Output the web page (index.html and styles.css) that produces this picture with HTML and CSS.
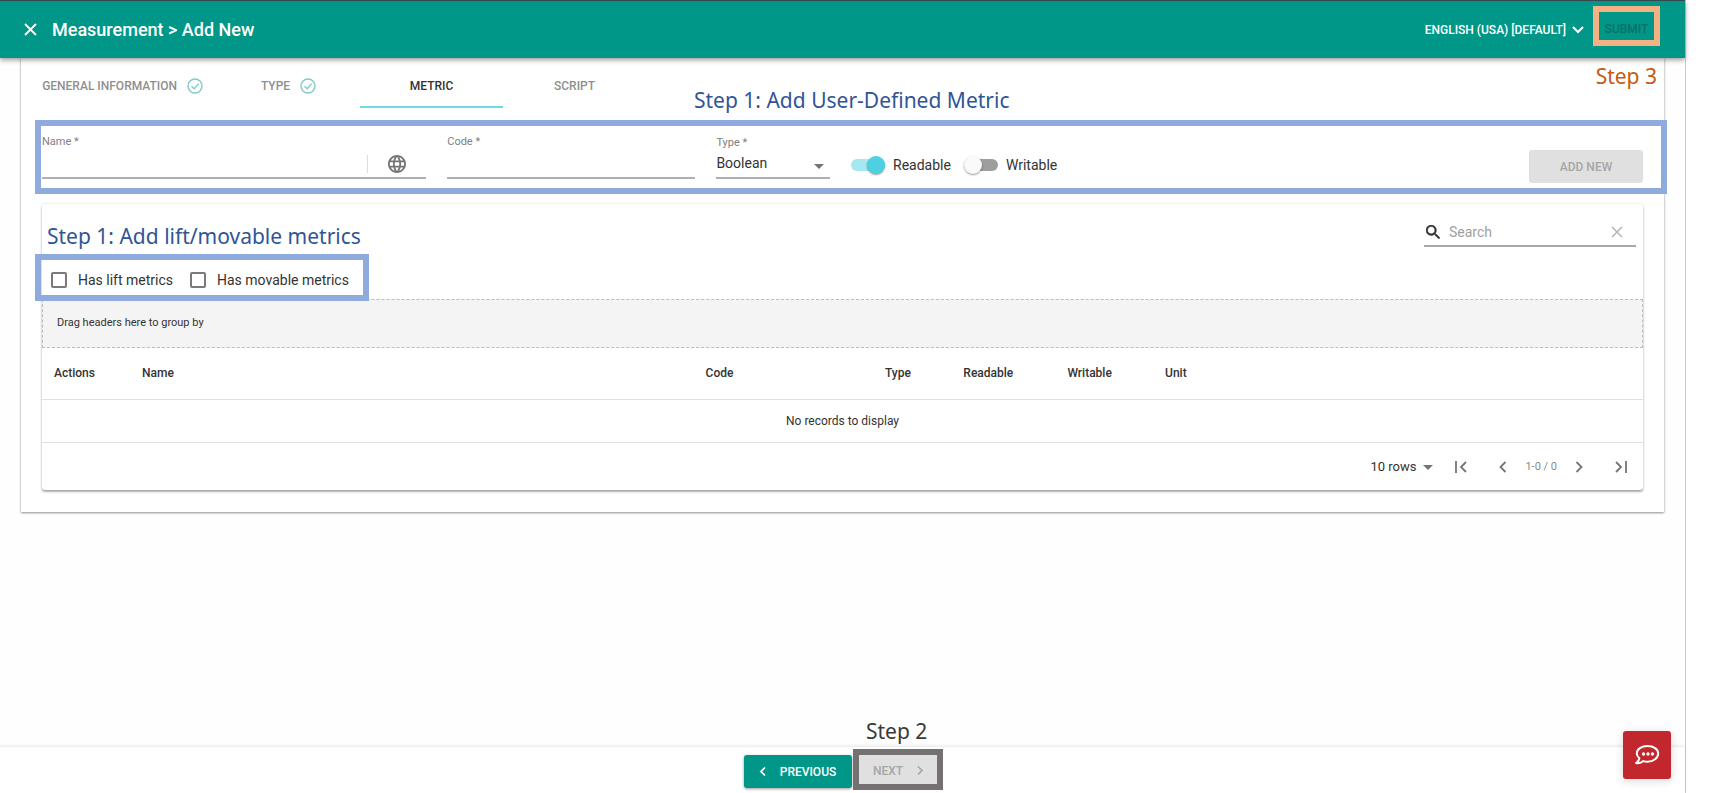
FILE: index.html
```html
<!DOCTYPE html>
<html lang="en">
<head>
<meta charset="utf-8">
<title>Measurement &gt; Add New</title>
<link rel="stylesheet" href="styles.css">
</head>
<body>
<div class="app">
  <header class="topbar">
    <button class="icon-btn close-btn" type="button" aria-label="Close">
      <svg width="13" height="13" viewBox="0 0 13 13" fill="none" stroke="currentColor" stroke-width="1.8"><path d="M1 1l11 11M12 1L1 12"/></svg>
    </button>
    <h1 class="title">Measurement &gt; Add New</h1>
    <button class="lang-btn" type="button">ENGLISH (USA) [DEFAULT]
      <svg width="12" height="8" viewBox="0 0 12 8" fill="none" stroke="currentColor" stroke-width="2"><path d="M1 1l5 5 5-5"/></svg>
    </button>
    <div class="submit-wrap">
      <button class="submit-btn" type="button" disabled>SUBMIT</button>
      <span class="note note-orange">Step 3</span>
    </div>
  </header>

  <main class="card">
    <nav class="tabs">
      <a class="tab tab-first" href="#general">GENERAL INFORMATION
        <svg class="check" width="16" height="16" viewBox="0 0 16 16" fill="none" stroke="currentColor" stroke-width="1.4"><circle cx="8" cy="8" r="7"/><path d="M4.5 8.2l2.6 2.6 4.6-5.2"/></svg>
      </a>
      <a class="tab" href="#type">TYPE
        <svg class="check" width="16" height="16" viewBox="0 0 16 16" fill="none" stroke="currentColor" stroke-width="1.4"><circle cx="8" cy="8" r="7"/><path d="M4.5 8.2l2.6 2.6 4.6-5.2"/></svg>
      </a>
      <a class="tab tab-active" href="#metric">METRIC</a>
      <a class="tab" href="#script">SCRIPT</a>
    </nav>

    <form class="metric-form">
      <span class="frame"></span>
      <span class="note note-metric">Step 1: Add User-Defined Metric</span>
      <div class="field field-name">
        <label for="name">Name *</label>
        <div class="control">
          <input id="name" type="text">
          <button class="icon-btn globe-btn" type="button" aria-label="Translations">
            <svg width="18" height="18" viewBox="2 2 20 20" fill="currentColor"><path d="M11.99 2C6.47 2 2 6.48 2 12s4.47 10 9.99 10C17.52 22 22 17.52 22 12S17.52 2 11.99 2zm6.93 6h-2.95c-.32-1.25-.78-2.45-1.38-3.56 1.84.63 3.37 1.91 4.33 3.56zM12 4.04c.83 1.2 1.48 2.53 1.91 3.96h-3.82c.43-1.43 1.08-2.76 1.91-3.96zM4.26 14C4.1 13.36 4 12.69 4 12s.1-1.36.26-2h3.38c-.08.66-.14 1.32-.14 2s.06 1.34.14 2H4.26zm.82 2h2.95c.32 1.25.78 2.45 1.38 3.56-1.84-.63-3.37-1.9-4.33-3.56zm2.95-8H5.08c.96-1.66 2.49-2.93 4.33-3.56C8.81 5.55 8.35 6.75 8.03 8zM12 19.96c-.83-1.2-1.48-2.53-1.91-3.96h3.82c-.43 1.43-1.08 2.76-1.91 3.96zM14.34 14H9.66c-.09-.66-.16-1.32-.16-2s.07-1.35.16-2h4.68c.09.65.16 1.32.16 2s-.07 1.34-.16 2zm.25 5.56c.6-1.11 1.06-2.31 1.38-3.56h2.95c-.96 1.65-2.49 2.93-4.33 3.56zM16.36 14c.08-.66.14-1.32.14-2s-.06-1.34-.14-2h3.38c.16.64.26 1.31.26 2s-.1 1.36-.26 2h-3.38z"/></svg>
          </button>
        </div>
      </div>
      <div class="field field-code">
        <label for="code">Code *</label>
        <div class="control"><input id="code" type="text"></div>
      </div>
      <div class="field field-type">
        <label for="type">Type *</label>
        <div class="control">
          <select id="type"><option>Boolean</option></select>
          <svg class="caret" width="10" height="5" viewBox="0 0 10 5" fill="currentColor"><path d="M0 0h10L5 5z"/></svg>
        </div>
      </div>
      <div class="switches">
        <label class="switch"><input type="checkbox" checked>Readable</label>
        <label class="switch"><input type="checkbox">Writable</label>
      </div>
      <button class="btn btn-disabled add-btn" type="button" disabled>ADD NEW</button>
    </form>

    <section class="table-card">
      <div class="toolbar">
        <span class="note note-lift">Step 1: Add lift/movable metrics</span>
        <div class="search">
          <svg width="14" height="14" viewBox="3 3 17.5 17.5" fill="currentColor"><path d="M15.5 14h-.79l-.28-.27C15.41 12.59 16 11.11 16 9.500 16 5.910 13.090 3 9.500 3S3 5.910 3 9.500 5.910 16 9.500 16c1.610 0 3.090-.59 4.230-1.570l.27.28v.79l5 4.990L20.490 19l-4.990-5zm-6 0C7.010 14 5 11.990 5 9.500S7.010 5 9.500 5 14 7.010 14 9.500 11.990 14 9.500 14z" stroke="currentColor" stroke-width=".6"/></svg>
          <input type="text" placeholder="Search" aria-label="Search">
          <button class="icon-btn clear-btn" type="button" aria-label="Clear search">
            <svg width="12" height="12" viewBox="0 0 12 12" fill="none" stroke="currentColor" stroke-width="1.5"><path d="M1 1l10 10M11 1L1 11"/></svg>
          </button>
        </div>
      </div>
      <div class="options">
        <span class="frame frame-options"></span>
        <label class="tick"><input type="checkbox">Has lift metrics</label>
        <label class="tick"><input type="checkbox">Has movable metrics</label>
      </div>
      <div class="group-drop">Drag headers here to group by</div>
      <table class="grid">
        <colgroup><col class="c-actions"><col class="c-name"><col class="c-code"><col class="c-type"><col class="c-read"><col class="c-write"><col></colgroup>
        <thead><tr><th>Actions</th><th>Name</th><th>Code</th><th>Type</th><th>Readable</th><th>Writable</th><th>Unit</th></tr></thead>
        <tbody><tr><td colspan="7">No records to display</td></tr></tbody>
      </table>
      <div class="pager">
        <div class="rows">
          <select aria-label="Rows per page"><option>10 rows</option></select>
          <svg class="caret" width="10" height="5" viewBox="0 0 10 5" fill="currentColor"><path d="M0 0h10L5 5z"/></svg>
        </div>
        <button class="icon-btn" type="button" aria-label="First page"><svg width="12" height="12" viewBox="0 0 12 12" fill="none" stroke="currentColor" stroke-width="1.8"><path d="M1 0v12M11 1L6 6l5 5"/></svg></button>
        <button class="icon-btn" type="button" aria-label="Previous page"><svg width="12" height="12" viewBox="0 0 12 12" fill="none" stroke="currentColor" stroke-width="1.8"><path d="M8.500 1l-5 5 5 5"/></svg></button>
        <span class="range">1-0 / 0</span>
        <button class="icon-btn" type="button" aria-label="Next page"><svg width="12" height="12" viewBox="0 0 12 12" fill="none" stroke="currentColor" stroke-width="1.8"><path d="M3.500 1l5 5-5 5"/></svg></button>
        <button class="icon-btn" type="button" aria-label="Last page"><svg width="12" height="12" viewBox="0 0 12 12" fill="none" stroke="currentColor" stroke-width="1.8"><path d="M11 0v12M1 1l5 5-5 5"/></svg></button>
      </div>
    </section>
  </main>

  <footer class="bottombar">
    <button class="btn btn-primary" type="button">
      <svg width="6" height="9" viewBox="0 0 6 9" fill="none" stroke="currentColor" stroke-width="1.6"><path d="M5 .5l-4 4 4 4"/></svg>
      PREVIOUS
    </button>
    <div class="next-wrap">
      <span class="note note-dark">Step 2</span>
      <button class="next-btn" type="button" disabled>NEXT
        <svg width="6" height="9" viewBox="0 0 6 9" fill="none" stroke="currentColor" stroke-width="1.6"><path d="M1 .5l4 4-4 4"/></svg>
      </button>
    </div>
  </footer>
  <button class="chat-btn" type="button" aria-label="Chat">
    <svg width="26" height="22" viewBox="0 0 26 22" fill="none" stroke="currentColor" stroke-width="2" stroke-linejoin="round"><path d="M13.500 2C7.500 2 2.800 5.200 2.800 9.300c0 2 1 3.700 2.600 5-.3 1.900-1.400 3.500-3.400 4.700 2.600.6 5.200 0 7.300-1.900 1.300.4 2.700.6 4.200.6 6 0 10.700-3.700 10.700-8.200S19.500 2 13.500 2z"/><g fill="currentColor" stroke="none"><circle cx="9.500" cy="10" r="1.700"/><circle cx="14" cy="10" r="1.700"/><circle cx="18.500" cy="10" r="1.700"/></g></svg>
  </button>
</div>
</body>
</html>
```

FILE: styles.css
```css
* { box-sizing: border-box; }
body {
  margin: 0;
  padding-right: 23px;
  background: #fff;
  color: #333;
  font: 14px/20px Roboto, "Liberation Sans", sans-serif;
}
button, input, select { font: inherit; color: inherit; }
button { border: 0; background: none; padding: 0; }
.app {
  position: relative;
  display: flex;
  flex-direction: column;
  min-height: 100vh;
  border-right: 1px solid #ccc;
  background: #fefefe;
}
.icon-btn { display: flex; align-items: center; justify-content: center; }

/* Step annotations laid over the interface */
.note {
  position: absolute;
  font: 21px/28px "Noto Sans", "Open Sans", sans-serif;
  white-space: nowrap;
  color: #2f5597;
}
.frame {
  position: absolute;
  inset: 0 -24px 0 -7px;
  border: 6px solid #8faadc;
  pointer-events: none;
}
.frame-options { inset: 0 auto -2px -7px; width: 334px; }
.note-metric { left: 652px; top: -34px; }
.note-lift { left: 5px; top: 18px; }
.note-orange { right: 28px; top: 61px; color: #c55a11; }
.note-dark { left: 13px; top: -32px; color: #3b3838; }

/* Header */
.topbar {
  position: relative;
  z-index: 1;
  display: flex;
  align-items: center;
  height: 58px;
  padding: 0 25px 0 24px;
  border-top: 1px solid #37474f;
  background: #009688;
  color: #fff;
  box-shadow: 0 2px 5px rgba(0, 0, 0, .4);
}
.title { margin: 0 auto 0 15px; font-size: 18px; line-height: 24px; font-weight: 500; }
.lang-btn {
  display: flex;
  align-items: center;
  gap: 6px;
  margin-right: 9px;
  font-size: 12px;
  font-weight: 500;
}
.submit-wrap { display: flex; align-self: flex-start; padding-top: 5px; }
.submit-btn {
  width: 67px;
  height: 40px;
  padding-top: 6px;
  border: 6px solid #f4b183;
  color: #087267;
  font-size: 12px;
  font-weight: 500;
}

/* Main card and tabs */
.card {
  margin: 0 21px;
  padding: 0 21px 22px;
  background: #fff;
  box-shadow: 0 1px 2px rgba(0, 0, 0, .4), 0 0 3px rgba(0, 0, 0, .1);
}
.tabs { display: flex; height: 50px; margin: 0 -21px; }
.tab {
  display: flex;
  align-items: center;
  justify-content: center;
  gap: 10px;
  width: 143px;
  padding-top: 8px;
  border-bottom: 2px solid transparent;
  color: #8f8f8f;
  font-size: 12px;
  font-weight: 500;
  text-decoration: none;
}
.tab-first { width: 196px; padding-right: 14px; justify-content: flex-end; }
.tab-active { border-color: #6fd8e5; color: #333; }
.check { color: #80cbc4; }

/* Metric form */
.metric-form {
  position: relative;
  display: flex;
  align-items: flex-start;
  gap: 21px;
  height: 74px;
  margin-top: 12px;
  padding-top: 14px;
}
.field label { display: block; color: #808080; font-size: 11px; line-height: 16px; }
.field-name { width: 24%; }
.field-code { width: 15.5%; }
.field-type { width: 7.1%; }
.field-type label { padding-top: 2px; line-height: 14px; }
.control {
  position: relative;
  display: flex;
  align-items: center;
  height: 29px;
  border-bottom: 2px solid #b0b0b0;
}
.control input {
  flex: 1;
  min-width: 0;
  border: 0;
  outline: 0;
  background: none;
}
.globe-btn {
  width: 59px;
  height: 18px;
  border-left: 1px solid #ddd;
  color: #757575;
}
.control select, .rows select {
  width: 100%;
  padding: 0;
  border: 0;
  background: none;
  appearance: none;
}
.control select { padding-bottom: 2px; }
.caret { position: absolute; right: 6px; top: 50%; color: #757575; pointer-events: none; }
.rows .caret { top: 8px; }
.switches { display: flex; gap: 13px; padding-top: 21px; }
.switch { display: flex; align-items: center; gap: 8px; }
.switch input {
  position: relative;
  width: 34px;
  height: 18px;
  margin: 0;
  appearance: none;
}
.switch input::before {
  content: "";
  position: absolute;
  inset: 3px 0;
  border-radius: 6px;
  background: #9e9e9e;
}
.switch input::after {
  content: "";
  position: absolute;
  left: 0;
  top: 0;
  width: 18px;
  height: 18px;
  border-radius: 50%;
  background: #fafafa;
  box-shadow: 0 1px 2px rgba(0, 0, 0, .4);
}
.switch input:checked::before { background: #a6e8f0; }
.switch input:checked::after { left: 16px; background: #4dd0e1; }

/* Buttons */
.btn {
  display: flex;
  align-items: center;
  justify-content: center;
  gap: 14px;
  height: 33px;
  border-radius: 3px;
  font-size: 12px;
  font-weight: 500;
}
.btn-disabled { background: #e0e0e0; color: #a6a6a6; }
.add-btn { width: 114px; margin: 16px 0 0 auto; }
.btn-primary {
  width: 108px;
  background: #009688;
  color: #fff;
  box-shadow: 0 1px 3px rgba(0, 0, 0, .4);
}

/* Metrics table */
.table-card {
  margin-top: 10px;
  border-radius: 3px;
  background: #fff;
  box-shadow: 0 2px 2px rgba(0, 0, 0, .3), 0 0 3px rgba(0, 0, 0, .15);
}
.toolbar {
  position: relative;
  display: flex;
  justify-content: flex-end;
  height: 50px;
  padding: 14px 7px 0 0;
}
.search {
  display: flex;
  align-items: center;
  gap: 9px;
  width: 212px;
  height: 29px;
  padding-left: 2px;
  border-bottom: 2px solid #a8a8a8;
}
.search input {
  flex: 1;
  min-width: 0;
  padding: 0;
  border: 0;
  outline: 0;
  background: none;
}
.search input::placeholder { color: #a0a0a0; }
.clear-btn { width: 38px; color: #b5b5b5; }
.options {
  position: relative;
  display: flex;
  align-items: center;
  gap: 17px;
  height: 45px;
  padding: 6px 9px 0;
}
.tick { display: flex; align-items: center; gap: 11px; }
.tick input {
  width: 16px;
  height: 16px;
  margin: 0;
  border: 2px solid #7a7a7a;
  border-radius: 2px;
  appearance: none;
}
.group-drop {
  height: 49px;
  padding: 0 14px;
  border: 1px dashed #bdbdbd;
  background: #f4f4f4;
  font-size: 11px;
  line-height: 46px;
}
.grid { width: 100%; border-collapse: collapse; table-layout: fixed; font-size: 12px; }
.grid th, .grid td { padding: 0 12px; border-bottom: 1px solid #e0e0e0; }
.grid th { height: 51px; text-align: left; font-weight: 500; }
.grid td { height: 43px; text-align: center; }
.c-actions { width: 5.5%; }
.c-name { width: 35.2%; }
.c-code { width: 11.2%; }
.c-type { width: 4.9%; }
.c-read { width: 6.5%; }
.c-write { width: 6.1%; }
.pager {
  display: flex;
  align-items: center;
  justify-content: flex-end;
  height: 47px;
  padding: 1px 16px 0 0;
  color: #757575;
}
.rows { position: relative; width: 69px; margin-right: 16px; color: #333; font-size: 13px; }
.pager .icon-btn + .icon-btn { margin-left: 30px; }
.range { margin: 0 16px; font-size: 11px; color: #8a8a8a; }

/* Bottom bar */
.bottombar {
  display: flex;
  align-items: flex-start;
  justify-content: center;
  gap: 1px;
  height: 46px;
  margin-top: auto;
  padding: 2px 0 0 2px;
  background: #fff;
  box-shadow: 0 -1px 3px rgba(0, 0, 0, .1);
}
.bottombar .btn { margin-top: 6px; }
.next-wrap { position: relative; }
.next-btn {
  display: flex;
  align-items: center;
  justify-content: center;
  gap: 14px;
  width: 90px;
  height: 41px;
  padding-top: 2px;
  border: 6px solid #767171;
  background: #e0e0e0;
  color: #a6a6a6;
  font-size: 12px;
  font-weight: 500;
}
.chat-btn {
  position: fixed;
  right: 38px;
  bottom: 14px;
  display: flex;
  align-items: center;
  justify-content: center;
  width: 48px;
  height: 48px;
  border-radius: 3px;
  background: #c1272d;
  color: #fff;
  box-shadow: 0 2px 10px rgba(0, 0, 0, .15);
}
```
